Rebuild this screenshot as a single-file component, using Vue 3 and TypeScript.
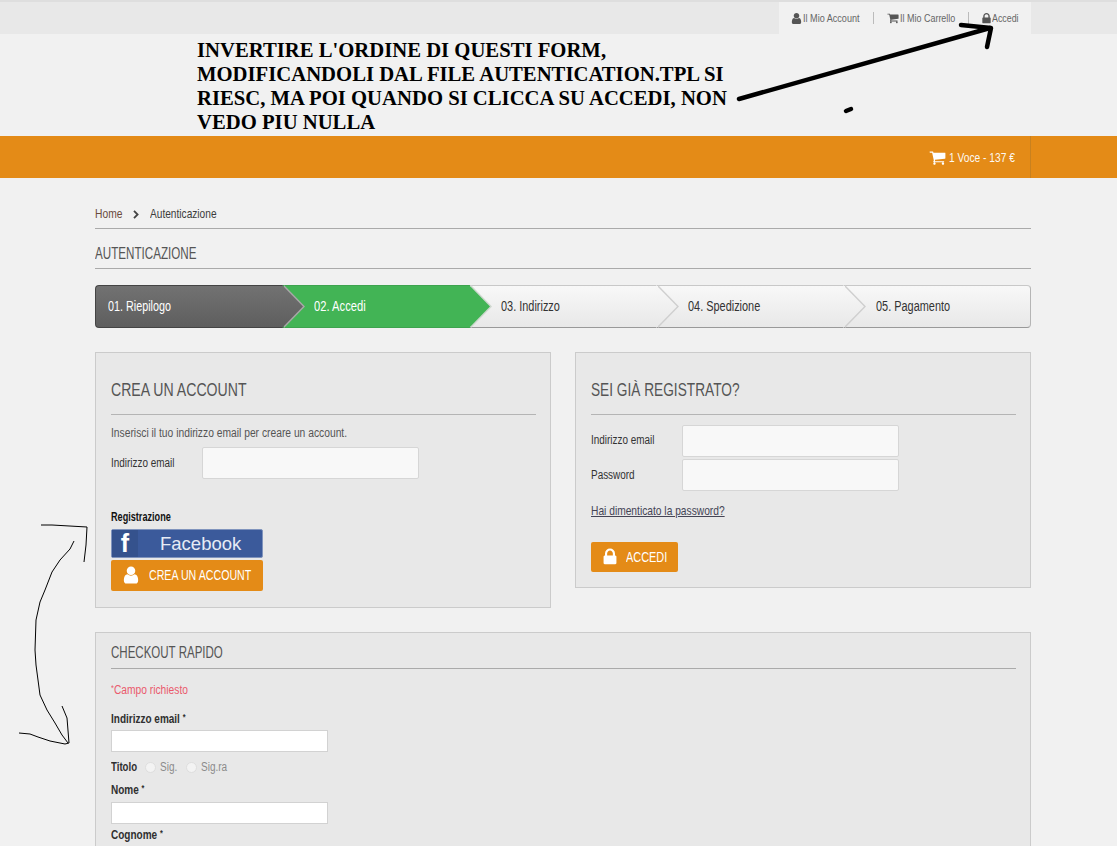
<script setup lang="ts">
const steps: { label: string; cls: string }[] = [
  { label: '01. Riepilogo', cls: 'done' },
  { label: '02. Accedi', cls: 'current' },
  { label: '03. Indirizzo', cls: 'todo' },
  { label: '04. Spedizione', cls: 'todo' },
  { label: '05. Pagamento', cls: 'last' },
]
const userPath = 'M1536 1399q0 109-62.5 187t-150.5 78h-854q-88 0-150.500-78t-62.500-187q0-85 8.500-160.500t31.500-152 58.500-131 94-89 134.500-34.500q131 128 313 128t313-128q76 0 134.500 34.500t94 89 58.500 131 31.500 152 8.500 160.500zm-256-887q0 159-112.500 271.500t-271.500 112.500-271.500-112.500-112.500-271.500 112.500-271.500 271.500-112.500 271.500 112.500 112.500 271.500z'
const lockPath = 'M640 768h512v-192q0-106-75-181t-181-75-181 75-75 181v192zm832 96v576q0 40-28 68t-68 28h-960q-40 0-68-28t-28-68v-576q0-40 28-68t68-28h32v-192q0-184 132-316t316-132 316 132 132 316v192h32q40 0 68 28t28 68z'
const cartPath = 'M704 1536q0 52-38 90t-90 38-90-38-38-90 38-90 90-38 90 38 38 90zm896 0q0 52-38 90t-90 38-90-38-38-90 38-90 90-38 90 38 38 90zm128-1088v512q0 24-16.500 42.500t-40.500 21.500l-1044 122q13 60 13 70 0 16-24 64h920q26 0 45 19t19 45-19 45-45 19h-1024q-26 0-45-19t-19-45q0-11 8-31.500t16-36 21.500-40 15.500-29.500l-177-823h-204q-26 0-45-19t-19-45 19-45 45-19h256q16 0 28.500 6.500t19.500 15.500 13 24.500 8 26 5.500 29.500 4.500 26h1201q26 0 45 19t19 45z'
</script>

<template>
  <div class="page">
    <div class="topbar">
      <ul class="topnav">
        <li class="n1"><svg class="ico" viewBox="0 0 1792 1792"><path :d="userPath" /></svg><span class="c">Il Mio Account</span></li>
        <li class="n2"><svg class="ico" viewBox="0 0 1792 1792"><path :d="cartPath" /></svg><span class="c">Il Mio Carrello</span></li>
        <li class="n3"><svg class="ico" viewBox="0 0 1792 1792"><path :d="lockPath" /></svg><span class="c">Accedi</span></li>
      </ul>
    </div>
    <div class="note">
      <p>INVERTIRE L'ORDINE DI QUESTI FORM,<br />MODIFICANDOLI DAL FILE AUTENTICATION.TPL SI<br />RIESC, MA POI QUANDO SI CLICCA SU ACCEDI, NON<br />VEDO PIU NULLA</p>
    </div>
    <div class="orange">
      <div class="orange-inner">
        <svg class="cart-big" viewBox="0 0 1792 1792"><path :d="cartPath" /></svg>
        <span class="c">1 Voce - 137 €</span>
      </div>
    </div>
    <main class="container">
      <div class="crumbs">
        <a class="c">Home</a>
        <svg class="chev" viewBox="0 0 6 9" fill="none"><path d="M1 .8 L4.600 4.500 L1 8.200" /></svg>
        <span class="c">Autenticazione</span>
      </div>
      <h1 class="title"><span class="c">AUTENTICAZIONE</span></h1>
      <ol class="steps">
        <li v-for="s in steps" :key="s.label" :class="['step', s.cls]"><span class="c">{{ s.label }}</span></li>
      </ol>
      <div class="cols">
        <section class="box left">
          <h2><span class="c">CREA UN ACCOUNT</span></h2>
          <p class="hint"><span class="c">Inserisci il tuo indirizzo email per creare un account.</span></p>
          <div class="row"><label><span class="c">Indirizzo email</span></label><div class="field"></div></div>
          <div class="reg"><span class="c">Registrazione</span></div>
          <div class="fb"><span class="fb-f">f</span><span class="fb-t">Facebook</span></div>
          <div class="btn wide"><svg class="bico" viewBox="0 0 1792 1792"><path :d="userPath" /></svg><span class="c">CREA UN ACCOUNT</span></div>
        </section>
        <section class="box right">
          <h2><span class="c">SEI GIÀ REGISTRATO?</span></h2>
          <div class="row first"><label><span class="c">Indirizzo email</span></label><div class="field"></div></div>
          <div class="row second"><label><span class="c">Password</span></label><div class="field"></div></div>
          <a class="forgot">Hai dimenticato la password?</a>
          <div class="btn small"><svg class="bico" viewBox="0 0 1792 1792"><path :d="lockPath" /></svg><span class="c">ACCEDI</span></div>
        </section>
      </div>
      <section class="box quick">
        <h3><span class="c">CHECKOUT RAPIDO</span></h3>
        <p class="req"><span class="c"><sup>*</sup>Campo richiesto</span></p>
        <label class="lab l1"><span class="c">Indirizzo email <sup>*</sup></span></label>
        <div class="inp i1"></div>
        <div class="title-row">
          <label class="lab t"><span class="c">Titolo</span></label>
          <i class="radio"></i><span class="c s1">Sig.</span>
          <i class="radio"></i><span class="c s2">Sig.ra</span>
        </div>
        <label class="lab l2"><span class="c">Nome <sup>*</sup></span></label>
        <div class="inp i2"></div>
        <label class="lab l3"><span class="c">Cognome <sup>*</sup></span></label>
      </section>
    </main>
    <svg class="scribble" width="1117" height="846" viewBox="0 0 1117 846" fill="none">
      <g stroke="#000" stroke-width="4.500" stroke-linecap="round" stroke-linejoin="round">
        <path d="M739 99 L990 28" />
        <path d="M961 25 L991 28 L987 47" />
        <path d="M846 111 L851 109" />
      </g>
      <g stroke="#000" stroke-width="1">
        <path d="M41 525 L52 525 L87 527 L86 545 L84 562" />
        <path d="M74 541 L70 549 L60 560 L52 572 L45 590 L40 602 L36 620 L35 650 L36 665 L40 695 L47 710 L55 723 L62 735 L68 743" />
        <path d="M62 706 L67 718 L69 743 L65 744 L50 741 L38 737 L30 734 L19 733" />
      </g>
    </svg>
  </div>
</template>

<style>
html, body { margin: 0; overflow: hidden; background: #f1f1f1; }
</style>

<style scoped>
.page { position: relative; width: 1117px; height: 846px; overflow: hidden; background: #f1f1f1; font-family: "Liberation Sans", Arial, sans-serif; font-size: 12px; color: #3c3c3c; --s: .78; }
.c { display: inline-block; white-space: nowrap; transform: scaleX(var(--s)); transform-origin: 0 50%; }
.topbar { height: 32px; border-top: 2px solid #dedede; background: #e8e8e8; display: flex; justify-content: flex-end; padding-right: 86px; }
.topnav { list-style: none; margin: 0; padding: 0 0 0 13px; width: 239px; height: 32px; background: #f1f1f1; display: flex; align-items: flex-start; }
.topnav li { display: flex; align-items: center; height: 12px; margin-top: 10px; font-size: 11.500px; color: #666; line-height: 12px; padding-right: 13px; margin-right: 13px; border-right: 1px solid #bbb; }
.topnav li.n3 { border: 0; margin-right: 0; padding: 0; }
.ico { width: 13px; height: 13px; fill: #555; flex: none; }
.n1 .ico { margin-left: -2px; }
.n1 .c { width: 57px; --s: .79; }
.n2 .ico { width: 12px; height: 12px; margin-right: 1px; }
.n2 .c { width: 55px; }
.n3 .ico { margin-left: -2px; margin-right: -1px; }
.n3 .c { width: 27px; --s: .77; }
.note { height: 102px; box-sizing: border-box; padding: 4px 0 0 197px; }
.note p { margin: 0; font: bold 20.700px/24px "Liberation Serif", "Times New Roman", serif; color: #000; white-space: nowrap; }
.orange { height: 42px; background: #e48b17; }
.orange-inner { width: 935px; height: 42px; margin-left: 95px; border-right: 1px solid #c8811f; display: flex; justify-content: flex-end; align-items: center; color: #fff; }
.orange-inner .c { width: 66px; margin-right: 15px; margin-left: 3px; font-size: 13px; opacity: .95; --s: .785; }
.cart-big { width: 17px; height: 17px; fill: #fff; }
.container { width: 936px; margin-left: 95px; }
.crumbs { height: 51px; box-sizing: border-box; padding-top: 28px; line-height: 16px; border-bottom: 1px solid #aaa; font-size: 13px; display: flex; align-items: flex-start; }
.crumbs a.c { width: 27px; color: #6a4a3c; --s: .79; }
.chev { width: 6px; height: 9px; margin: 4px 11px 0 11px; stroke: #444; stroke-width: 1.800; flex: none; }
.title { margin: 0; height: 40px; box-sizing: border-box; border-bottom: 1px solid #aaa; font-size: 16px; font-weight: 400; color: #555; line-height: 50px; --s: .727; }
.steps { list-style: none; margin: 16px 0 24px; padding: 0; display: flex; height: 43px; border-radius: 4px; }
.step { position: relative; flex: none; width: 187px; box-sizing: border-box; display: flex; align-items: center; padding: 0 0 2px 31px; font-size: 14px; background: linear-gradient(#f8f8f8, #e8e8e8); border-top: 1px solid #c8c8c8; border-bottom: 1px solid #999; color: #333; }
.step:nth-child(1) { width: 188px; z-index: 5; padding-left: 12px; border: 1px solid #444; border-right: 0; border-radius: 4px 0 0 4px; background: linear-gradient(#727272, #5e5e5e); color: #fff; --s: .77; }
.step:nth-child(2) { z-index: 4; background: #42b455; border-color: #3da34e; color: #fff; --s: .8; }
.step:nth-child(3) { z-index: 3; }
.step:nth-child(4) { z-index: 2; }
.step:nth-child(5) { z-index: 1; flex: 1; padding-left: 32px; border-right: 1px solid #b5b5b5; border-radius: 0 4px 4px 0; }
.step:not(:last-child)::before, .step:not(:last-child)::after { content: ""; position: absolute; top: -1px; bottom: -1px; width: 21px; clip-path: polygon(0 0, 100% 50%, 0 100%); }
.step:not(:last-child)::before { right: -22px; background: #cfcfcf; }
.step:not(:last-child)::after { right: -20px; background: linear-gradient(#f8f8f8, #e8e8e8); }
.step.done::before { background: #a8a8a8; }
.step.done::after { background: linear-gradient(#727272, #5e5e5e); }
.step.current::before { background: #cfd8cf; }
.step.current::after { background: #42b455; }
.cols { display: flex; gap: 24px; align-items: flex-start; }
.box { box-sizing: border-box; background: #e8e8e8; border: 1px solid #cbcbcb; padding: 0 14px 0 15px; }
.left, .right { width: 456px; }
.left { height: 256px; }
.right { height: 236px; }
h2 { margin: 0; height: 61px; border-bottom: 1px solid #b4b4b4; font-size: 19px; font-weight: 400; color: #555; line-height: 73px; --s: .742; }
.right h2 { --s: .72; }
.hint { margin: 11px 0 0; font-size: 12px; line-height: 14px; color: #555; --s: .857; }
.row { display: flex; align-items: center; height: 32px; margin-top: 7px; }
.row label { width: 91px; font-size: 12.500px; color: #333; flex: none; --s: .795; }
.row.first { margin-top: 10px; }
.row.first label { margin-bottom: 2px; }
.row.second { margin-top: 2px; }
.field { width: 215px; height: 30px; background: #f8f8f8; border: 1px solid #d6d6d6; border-radius: 2px; }
.reg { margin-top: 31px; height: 19px; font-size: 12px; font-weight: 700; color: #111; line-height: 14px; --s: .76; }
.fb { display: flex; width: 152px; height: 29px; border-radius: 2px; background: #3b5a9b; color: #fff; box-sizing: border-box; border: 1px solid #8094bd; }
.fb-f { width: 26px; height: 27px; flex: none; background: #35528d; font-size: 25px; font-weight: 700; line-height: 27px; text-align: center; }
.fb-t { flex: 1; font-size: 18.500px; line-height: 27px; padding-left: 22px; color: #e6ebf5; }
.btn { display: flex; align-items: center; background: #e48b17; color: #fff; border-radius: 2px; font-size: 14px; }
.btn.wide { width: 152px; height: 31px; margin-top: 2px; padding: 0 0 2px 9.500px; box-sizing: border-box; --s: .76; }
.btn.wide .bico { margin-right: 8.500px; }
.btn.small { width: 87px; height: 30px; margin-top: 24px; padding-left: 8.500px; box-sizing: border-box; }
.btn.small .bico { margin-right: 6.500px; }
.bico { width: 20px; height: 20px; fill: #fff; flex: none; }
.forgot { display: inline-block; margin-top: 12px; font-size: 13px; line-height: 15px; color: #445; text-decoration: underline; white-space: nowrap; transform: scaleX(.787); transform-origin: 0 50%; }
.quick { margin-top: 24px; height: 300px; }
h3 { margin: 0; height: 35px; border-bottom: 1px solid #aaa; font-size: 16px; font-weight: 400; color: #555; line-height: 40px; --s: .72; }
.req { margin: 13px 0 0; height: 16px; font-size: 12.500px; line-height: 16px; color: #ea5a6c; --s: .82; }
sup { font-size: 9px; line-height: 0; vertical-align: 3px; }
.lab { display: block; font-size: 12.500px; font-weight: 700; color: #2f2f2f; line-height: 14px; --s: .8; }
.l1 { margin-top: 14px; }
.l2 { margin-top: 9px; }
.l3 { margin-top: 4px; }
.inp { width: 217px; height: 22px; box-sizing: border-box; background: #fff; border: 1px solid #d2d2d2; margin-top: 5px; }
.inp.i1 { margin-top: 4px; }
.title-row { display: flex; align-items: center; height: 14px; margin-top: 8px; font-size: 12.500px; color: #8b8b8b; --s: .8; }
.title-row .lab.t { width: 26px; margin-right: 8px; --s: .77; }
.radio { width: 11px; height: 11px; border-radius: 50%; background: #f3f3f3; border: 1px solid #dedede; box-sizing: border-box; margin-right: 4px; flex: none; }
.s1 { width: 17px; margin-right: 9px; }
.s2 { width: 27px; }
.scribble { position: absolute; left: 0; top: 0; pointer-events: none; }
</style>
